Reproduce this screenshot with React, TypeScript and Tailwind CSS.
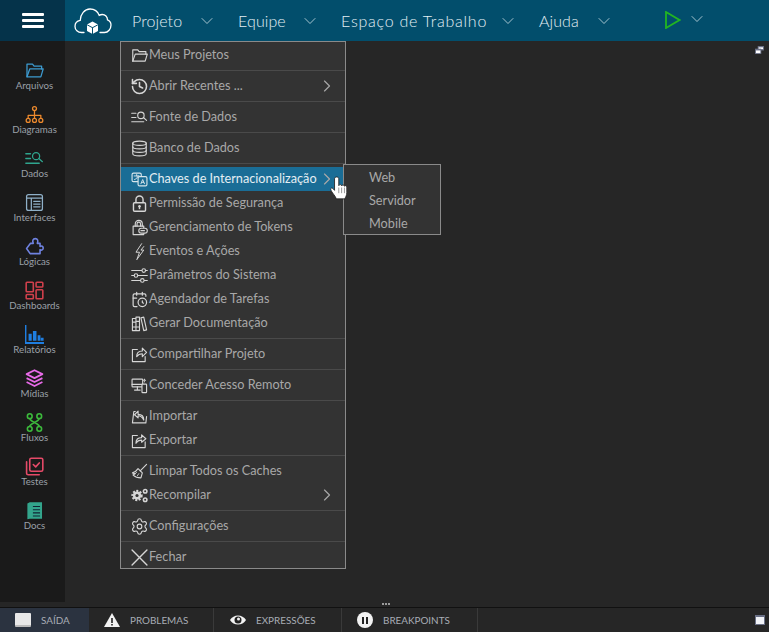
import type { ReactNode } from "react";
import { CalendarClock, ChevronDown, ChevronRight, History, Settings } from "lucide-react";

type IconProps = { className?: string };

const Svg = ({ className, children, box = 24 }: { className?: string; children: ReactNode; box?: number }) => (
  <svg
    viewBox={`0 0 ${box} ${box}`}
    fill="none"
    stroke="currentColor"
    strokeWidth="1.6"
    strokeLinecap="round"
    strokeLinejoin="round"
    className={className}
  >
    {children}
  </svg>
);

const Cloud = () => (
  <svg viewBox="0 0 38 28" className="w-[38px] h-[28px] text-white" fill="none" stroke="currentColor" strokeWidth="1.3" strokeLinecap="round">
    <path d="M10 25.5H7.5C3.8 25.5 1 22.8 1 19.4c0-3 2.2-5.500 5.200-6C6.400 7.200 10.600 2 16 2c4.400 0 7.800 2.600 9.200 6.400 1-.6 2-.9 3-.9 3 0 5.300 2.400 5.300 5.400 2.200.8 3.500 2.900 3.500 5.200 0 3.800-2.900 7.400-6.500 7.400H26" />
    <path d="M18.500 14.500l5.500 3v6.500l-5.500 3-5.500-3v-6.500z" fill="currentColor" stroke="none" />
    <path d="M13.500 18l5 2.700 5-2.700M18.500 20.700v6" stroke="#024e6c" strokeWidth="1" />
  </svg>
);

// sidebar icons
const Folder = ({ className }: IconProps) => (
  <Svg className={className}>
    <path d="M2.500 20V4h7l2 2.500H21V10" />
    <path d="M2.500 20l3.500-10h17l-3 10z" />
  </Svg>
);
const OrgChart = ({ className }: IconProps) => (
  <Svg className={className}>
    <circle cx="12" cy="4.500" r="2.500" />
    <path d="M12 7v6M4 17v-4h16v4M12 13v4" />
    <circle cx="4" cy="19.500" r="2.500" />
    <circle cx="12" cy="19.500" r="2.500" />
    <circle cx="20" cy="19.500" r="2.500" />
  </Svg>
);
const DataSearch = ({ className }: IconProps) => (
  <Svg className={className}>
    <path d="M1 6h6M1 12h6M1 18h17" />
    <circle cx="14" cy="9" r="4.500" />
    <path d="M17.500 12l4.500 4" />
  </Svg>
);
const Interfaces = ({ className }: IconProps) => (
  <Svg className={className}>
    <rect x="2" y="2" width="20" height="20" rx="2.500" />
    <path d="M2 6.500h20M8 6.500V22M11 10.500h8M11 14h8M11 17.500h8" />
  </Svg>
);
const PuzzleIcon = ({ className }: IconProps) => (
  <svg viewBox="0 0 24 24" fill="none" stroke="currentColor" strokeWidth="2" strokeLinejoin="round" className={className}>
    <path d="M7 8h3.500C9 5 10 2 13 2s4 3 2.500 6H19v4c2-1.500 4 0 4 2s-2 3.500-4 2v5H6.500L2 14.500z" />
  </svg>
);
const Boards = ({ className }: IconProps) => (
  <svg viewBox="0 0 24 24" fill="none" stroke="currentColor" strokeWidth="2" className={className}>
    <rect x="1.500" y="1.500" width="9" height="12" rx="1" />
    <rect x="14" y="1.500" width="8.500" height="6" rx="1" />
    <rect x="1.500" y="17" width="9" height="5.500" rx="1" />
    <rect x="14" y="11" width="8.500" height="11.500" rx="1" />
  </svg>
);
const Bars = ({ className }: IconProps) => (
  <svg viewBox="0 0 24 24" className={className} fill="currentColor">
    <path d="M0 0h1.800v21.500H24V24H0z" />
    <path d="M4.500 11h4v9h-4zM10 7.500h4.500V20H10zM16 13h3.500v7H16zM20 16h3.500v4H20z" />
  </svg>
);
const Stack = ({ className }: IconProps) => (
  <svg viewBox="0 0 24 24" fill="none" stroke="currentColor" strokeWidth="2.200" strokeLinejoin="round" className={className}>
    <path d="M12 1.500l10 5-10 5-10-5z" />
    <path d="M2 11.500l10 5 10-5" />
    <path d="M2 16.500l10 5 10-5" />
  </svg>
);
const Flow = ({ className }: IconProps) => (
  <svg viewBox="0 0 24 24" fill="none" stroke="currentColor" strokeWidth="2" className={className}>
    <circle cx="6" cy="4" r="3" />
    <circle cx="18" cy="4" r="3" />
    <circle cx="6" cy="20" r="3" />
    <circle cx="18" cy="20" r="3" />
    <path d="M6 7c0 4 12 6 12 10M18 7c0 4-12 6-12 10M9 12h6" />
  </svg>
);
const Tests = ({ className }: IconProps) => (
  <svg viewBox="0 0 24 24" fill="none" stroke="currentColor" strokeWidth="2" strokeLinecap="round" strokeLinejoin="round" className={className}>
    <rect x="6" y="1.500" width="16.500" height="16.500" rx="2" />
    <path d="M2 6v14.500a2 2 0 0 0 2 2h14" />
    <path d="M10.500 9.500l3 3 4.500-5" />
  </svg>
);
const Book = ({ className }: IconProps) => (
  <svg viewBox="0 0 24 24" className={className}>
    <path d="M3 3l3-1.500h15.500v21H6L3 23z" fill="currentColor" />
    <path d="M10 7h9M10 11h9M10 15h9M10 19h9" stroke="#123" strokeWidth="1.300" />
  </svg>
);

// menu icons
const Translate = ({ className }: IconProps) => (
  <Svg className={className}>
    <rect x="1.500" y="3" width="13" height="12" rx="2" />
    <rect x="10" y="8" width="12.500" height="13" rx="2" fill="#1a6d96" />
    <path d="M4.500 7h7M8 5v2M5 12c3-1 4.500-3 5-5M14 18l2.500-6 2.500 6M15 16h3" strokeWidth="1.300" />
  </Svg>
);
const LockIcon = ({ className }: IconProps) => (
  <svg viewBox="0 0 24 24" className={className} fill="none" stroke="currentColor" strokeWidth="2">
    <path d="M7 11V6.500a5 5 0 0 1 10 0V11" />
    <rect x="3.500" y="11" width="17" height="12" rx="1.500" />
    <circle cx="12" cy="16" r="1.800" fill="currentColor" stroke="none" />
    <path d="M12 16v4" />
  </svg>
);
const TokenLock = ({ className }: IconProps) => (
  <Svg className={className}>
    <path d="M6 10V7a5 5 0 0 1 10 0v3M8.500 10V7a2.500 2.500 0 0 1 5 0v3" />
    <path d="M3 10h15v12H3z" />
    <rect x="11" y="13" width="12" height="7" rx="3.500" fill="#333333" />
    <path d="M14 16.500h5" />
  </Svg>
);
const Bolt = ({ className }: IconProps) => (
  <Svg className={className}>
    <path d="M15 1L7 13h5l-3.500 10M18 5l-4 5h4L8.500 23" strokeWidth="1.400" />
  </Svg>
);
const Sliders = ({ className }: IconProps) => (
  <Svg className={className}>
    <path d="M1 5h14M21 5h2M1 12h3M10 12h13M1 19h12M19 19h4" />
    <circle cx="18" cy="5" r="2.500" />
    <circle cx="7" cy="12" r="2.500" />
    <circle cx="16" cy="19" r="2.500" />
  </Svg>
);
const DbIcon = ({ className }: IconProps) => (
  <Svg className={className}>
    <ellipse cx="12" cy="4.500" rx="9.500" ry="3" />
    <path d="M2.500 4.500v15c0 1.700 4.300 3 9.500 3s9.500-1.300 9.500-3v-15" />
    <path d="M2.500 9.500c0 1.700 4.300 3 9.500 3s9.500-1.300 9.500-3M2.500 14.500c0 1.700 4.300 3 9.500 3s9.500-1.300 9.500-3" />
  </Svg>
);
const Books = ({ className }: IconProps) => (
  <Svg className={className}>
    <path d="M2 5h5v17H2zM7 3h5v19H7zM2 10h5M7 9h5M2 17h5M7 17h5" />
    <path d="M14 4l4-1 4 18-4 1z" />
  </Svg>
);
const ShareBox = ({ className }: IconProps) => (
  <Svg className={className}>
    <path d="M9 5H2v17h18v-7" />
    <path d="M8 15c0-5 3-8 8-8V3l6 6-6 6v-4c-3 0-6 1-8 4z" />
  </Svg>
);
const Remote = ({ className }: IconProps) => (
  <Svg className={className}>
    <rect x="1.500" y="3" width="15" height="11" rx="1" />
    <path d="M1.500 10.500h15M9 14v4M5 18.500h8" />
    <rect x="15.500" y="10" width="6.500" height="12" rx="1" fill="#333333" />
    <path d="M19 3v4M17.500 5L19 3l1.500 2" strokeWidth="1.200" />
  </Svg>
);
const ImportIcon = ({ className }: IconProps) => (
  <Svg className={className}>
    <path d="M6 5H4L2 21h19l1-9" />
    <path d="M18 17c0-5-3-8-8-8V4.500L5 9.500l5 4.500v-3c3 0 6 2 8 6z" />
  </Svg>
);
const ExportIcon = ({ className }: IconProps) => (
  <Svg className={className}>
    <path d="M9 5H2v17h18v-8" />
    <path d="M7 16c0-5 3-8 8-8V4l6 5.500-6 5v-3c-3 0-6 1-8 4.500z" />
  </Svg>
);
const Broom = ({ className }: IconProps) => (
  <Svg className={className}>
    <path d="M22 2l-9 9" />
    <path d="M10 8l6 6-2 7c-4 0-8-1-11-4-.5-.5 2-1 3-2-2 0-3-.500-4-1 4-1 6-3 8-6z" />
    <path d="M8 13l-2 2M11 15l-2 3" strokeWidth="1.200" />
  </Svg>
);
const Gears = ({ className }: IconProps) => (
  <svg viewBox="0 0 24 24" className={className}>
    <circle cx="8.500" cy="12" r="6.500" fill="none" stroke="currentColor" strokeWidth="3" strokeDasharray="2.800 2" />
    <circle cx="8.500" cy="12" r="5.800" fill="currentColor" />
    <circle cx="8.500" cy="12" r="2.200" fill="#333333" />
    <circle cx="20" cy="6" r="2.500" fill="none" stroke="currentColor" strokeWidth="2.200" />
    <circle cx="20" cy="18" r="2.500" fill="none" stroke="currentColor" strokeWidth="2.200" />
  </svg>
);
const Settings17 = ({ className }: IconProps) => <Settings className={`${className} scale-110`} strokeWidth={1.4} />;
const History17 = ({ className }: IconProps) => <History className={`${className} scale-110`} strokeWidth={2} />;
const Calendar17 = ({ className }: IconProps) => <CalendarClock className={className} strokeWidth={1.7} />;
const CloseX = ({ className }: IconProps) => (
  <svg viewBox="0 0 16 16" className={className} stroke="currentColor" strokeWidth="1.300" strokeLinecap="round">
    <path d="M1 1l14 14M15 1L1 15" />
  </svg>
);

const HandCursor = () => (
  <svg viewBox="0 0 18 25" className="w-[17px] h-6">
    <path
      d="M4.800 2.700C4.800.2 9.300.2 9.300 2.700V10c.4-1.500 3-1.500 3 .2.400-1.300 3-1.200 3 .4.500-1 2.500-.8 2.500.9v6c0 3.200-1.500 4.500-2 6.500H6.700c-.5-1.800-1.500-3-3-5C2.500 17.500 1.200 15.400.8 14.200c-.5-1.500 1.400-2.300 2.500-1l1.500 1.800z"
      fill="#ffffff"
      stroke="#222222"
      strokeWidth="0.900"
      strokeLinejoin="round"
    />
    <path d="M9.300 12v6M12.300 12v6M15.300 12v6" stroke="#666666" strokeWidth="0.700" />
  </svg>
);

const sideItems = [
  { label: "Arquivos", Icon: Folder, color: "text-[#3d9bd0]" },
  { label: "Diagramas", Icon: OrgChart, color: "text-[#ee8a2d]" },
  { label: "Dados", Icon: DataSearch, color: "text-[#2fa58e]" },
  { label: "Interfaces", Icon: Interfaces, color: "text-[#8fb0c8]" },
  { label: "Lógicas", Icon: PuzzleIcon, color: "text-[#6f82e0]" },
  { label: "Dashboards", Icon: Boards, color: "text-[#d1404c]" },
  { label: "Relatórios", Icon: Bars, color: "text-[#1f7ee0]" },
  { label: "Mídias", Icon: Stack, color: "text-[#e86ae8]" },
  { label: "Fluxos", Icon: Flow, color: "text-[#3cba3c]" },
  { label: "Testes", Icon: Tests, color: "text-[#e64a68]" },
  { label: "Docs", Icon: Book, color: "text-[#33a58c]" },
];

type MenuEntry = { label: string; Icon: (p: IconProps) => ReactNode; arrow?: boolean; active?: boolean };

const menuGroups: MenuEntry[][] = [
  [{ label: "Meus Projetos", Icon: Folder }],
  [{ label: "Abrir Recentes ...", Icon: History17, arrow: true }],
  [{ label: "Fonte de Dados", Icon: DataSearch }],
  [{ label: "Banco de Dados", Icon: DbIcon }],
  [
    { label: "Chaves de Internacionalização", Icon: Translate, arrow: true, active: true },
    { label: "Permissão de Segurança", Icon: LockIcon },
    { label: "Gerenciamento de Tokens", Icon: TokenLock },
    { label: "Eventos e Ações", Icon: Bolt },
    { label: "Parâmetros do Sistema", Icon: Sliders },
    { label: "Agendador de Tarefas", Icon: Calendar17 },
    { label: "Gerar Documentação", Icon: Books },
  ],
  [{ label: "Compartilhar Projeto", Icon: ShareBox }],
  [{ label: "Conceder Acesso Remoto", Icon: Remote }],
  [
    { label: "Importar", Icon: ImportIcon },
    { label: "Exportar", Icon: ExportIcon },
  ],
  [
    { label: "Limpar Todos os Caches", Icon: Broom },
    { label: "Recompilar", Icon: Gears, arrow: true },
  ],
  [{ label: "Configurações", Icon: Settings17 }],
  [{ label: "Fechar", Icon: CloseX }],
];

const NavItem = ({ label, className, track = "tracking-[0.1px]" }: { label: string; className: string; track?: string }) => (
  <div className={`flex items-center ${className}`}>
    <span className={`text-[16px] font-light text-[#e4eff4] ${track}`}>{label}</span>
    <ChevronDown className="ml-auto -mr-[3px] w-5 h-5 text-[#dbe9ef]" strokeWidth={0.9} />
  </div>
);

const MenuRow = ({ label, Icon, arrow, active }: MenuEntry) => (
  <div className={`h-6 flex items-center pl-[10px] pr-2 text-[12.7px] ${active ? "bg-[#1a6d96] text-[#e4eef3]" : "text-[#a8a8a8]"}`}>
    <span className={`w-[18px] shrink-0 flex ${active ? "text-[#d8e6ec]" : "text-[#d6d6d6]"}`}>
      <Icon className="w-[17px] h-[17px]" />
    </span>
    <span className="whitespace-nowrap">{label}</span>
    {arrow && <ChevronRight className="ml-auto w-5 h-5 text-[#a8a8a8]" strokeWidth={1.4} />}
  </div>
);

const tabs = [
  { label: "SAÍDA", className: "w-[89px] bg-[#2b3340] pl-[15px] gap-[10px]", icon: <span className="w-4 h-[14px] bg-[#e8e8e8] rounded-[1px] border-b-2 border-[#bbbbbb]" /> },
  {
    label: "PROBLEMAS",
    className: "w-[125px] pl-[15px] gap-[10px] border-r border-[#3a3a3a]",
    icon: (
      <svg viewBox="0 0 16 16" className="w-4 h-4">
        <path d="M8 1L16 15H0z" fill="#f2f2f2" />
        <path d="M7.200 6h1.600v5H7.200zM7.200 12h1.600v1.500H7.200z" fill="#222222" />
      </svg>
    ),
  },
  {
    label: "EXPRESSÕES",
    className: "w-[128px] pl-[16px] gap-[10px] border-r border-[#3a3a3a]",
    icon: (
      <svg viewBox="0 0 16 16" className="w-4 h-4">
        <path d="M0 8c3.500-6 12.500-6 16 0-3.500 6-12.500 6-16 0z" fill="#f2f2f2" />
        <circle cx="8" cy="8" r="3.500" fill="#222222" />
        <circle cx="8.500" cy="7" r="1.500" fill="#f2f2f2" />
      </svg>
    ),
  },
  {
    label: "BREAKPOINTS",
    className: "w-[136px] pl-[15px] gap-[10px] border-r border-[#3a3a3a]",
    icon: (
      <span className="w-4 h-4 rounded-full bg-[#f2f2f2] flex items-center justify-center gap-[2px]">
        <span className="w-[2px] h-[7px] bg-[#222222]" />
        <span className="w-[2px] h-[7px] bg-[#222222]" />
      </span>
    ),
  },
];

export default function App() {
  return (
    <div className="w-[769px] h-[632px] flex flex-col overflow-hidden bg-[#262626] font-['Lato',sans-serif]">
      {/* Top bar */}
      <header className="h-[41px] shrink-0 flex bg-[#024e6c]">
        <div className="w-[65px] bg-[#05334a] flex flex-col justify-center items-center gap-[3px]">
          <span className="w-[22px] h-[3px] bg-white rounded-[1px]" />
          <span className="w-[22px] h-[3px] bg-white rounded-[1px]" />
          <span className="w-[22px] h-[3px] bg-white rounded-[1px]" />
        </div>
        <div className="ml-[9px] w-[58px] flex items-center">
          <Cloud />
        </div>
        <NavItem label="Projeto" className="w-[82px]" />
        <div className="w-[24px]" />
        <NavItem label="Equipe" className="w-[79px]" />
        <div className="w-[24px]" />
        <NavItem label="Espaço de Trabalho" className="w-[174px]" track="tracking-[0.75px]" />
        <div className="w-[24px]" />
        <NavItem label="Ajuda" className="w-[72px]" />
        <div className="ml-[54px] flex items-center gap-[6px]">
          <svg viewBox="0 0 16 18" className="w-4 h-[18px] text-[#22b522] -mt-[1px]" fill="none" stroke="currentColor" strokeWidth="1.800">
            <path d="M1 1l13.500 8L1 17z" />
          </svg>
          <ChevronDown className="w-5 h-5 text-[#dbe9ef] -mt-[3px]" strokeWidth={0.9} />
        </div>
      </header>

      <div className="flex-1 flex min-h-0">
        {/* Sidebar */}
        <aside className="w-[65px] shrink-0 bg-[#1a1a1a] pt-5 pl-1">
          {sideItems.map(({ label, Icon, color }) => (
            <div key={label} className="h-11 flex flex-col items-center">
              <Icon className={`w-[19px] h-[19px] shrink-0 ${color}`} />
              <span className="-mt-px text-[9.7px] leading-[13px] text-[#9aa0a8] whitespace-nowrap">{label}</span>
            </div>
          ))}
        </aside>

        {/* Work area */}
        <main className="flex-1 relative">
          <svg viewBox="0 0 10 9" className="absolute right-[5px] top-[5px] w-[9px] h-2">
            <rect x="3" y="0" width="7" height="5" fill="#6a7086" />
            <rect x="4" y="1.500" width="5" height="2" fill="#ffffff" />
            <rect x="0" y="3" width="7" height="6" fill="#6a7086" />
            <rect x="1" y="5" width="5" height="3" fill="#ffffff" />
          </svg>

          {/* Projeto menu */}
          <div className="absolute left-[55px] top-0 w-[226px] h-[528px] bg-[#333333] border border-[#8a8a8a] pt-[1px]">
            {menuGroups.map((group, i) => (
              <div key={i}>
                {i > 0 && <div className="my-[3px] h-px bg-[#4a4a4a]" />}
                {group.map((entry) => (
                  <MenuRow key={entry.label} {...entry} />
                ))}
              </div>
            ))}
          </div>

          {/* Submenu */}
          <div className="absolute left-[278px] top-[123px] w-[98px] h-[71px] bg-[#333333] border border-[#8a8a8a] pt-[1px] pl-[25px] text-[12.7px] text-[#a8a8a8]">
            <div className="h-[23px] leading-[23px]">Web</div>
            <div className="h-[23px] leading-[23px]">Servidor</div>
            <div className="h-[23px] leading-[23px]">Mobile</div>
          </div>

          <div className="absolute left-[265px] top-[135px] flex">
            <HandCursor />
          </div>
        </main>
      </div>

      {/* Resize handle */}
      <div className="h-[5px] shrink-0 flex items-start justify-center gap-px pl-[3px] pt-px">
        <span className="w-[2px] h-[2px] bg-[#9a9a9a]" />
        <span className="w-[2px] h-[2px] bg-[#9a9a9a]" />
        <span className="w-[2px] h-[2px] bg-[#9a9a9a]" />
      </div>
      <div className="h-px shrink-0 bg-[#111111]" />

      {/* Bottom tabs */}
      <footer className="h-[24px] shrink-0 flex items-stretch">
        {tabs.map((t) => (
          <div key={t.label} className={`flex items-center ${t.className}`}>
            {t.icon}
            <span className="text-[9.9px] text-[#a8adb5]">{t.label}</span>
          </div>
        ))}
        <div className="ml-auto mr-[4px] self-center w-[10px] h-[10px] bg-[#f2f4f8] border border-[#6a7086] border-t-[2px]" />
      </footer>
    </div>
  );
}
